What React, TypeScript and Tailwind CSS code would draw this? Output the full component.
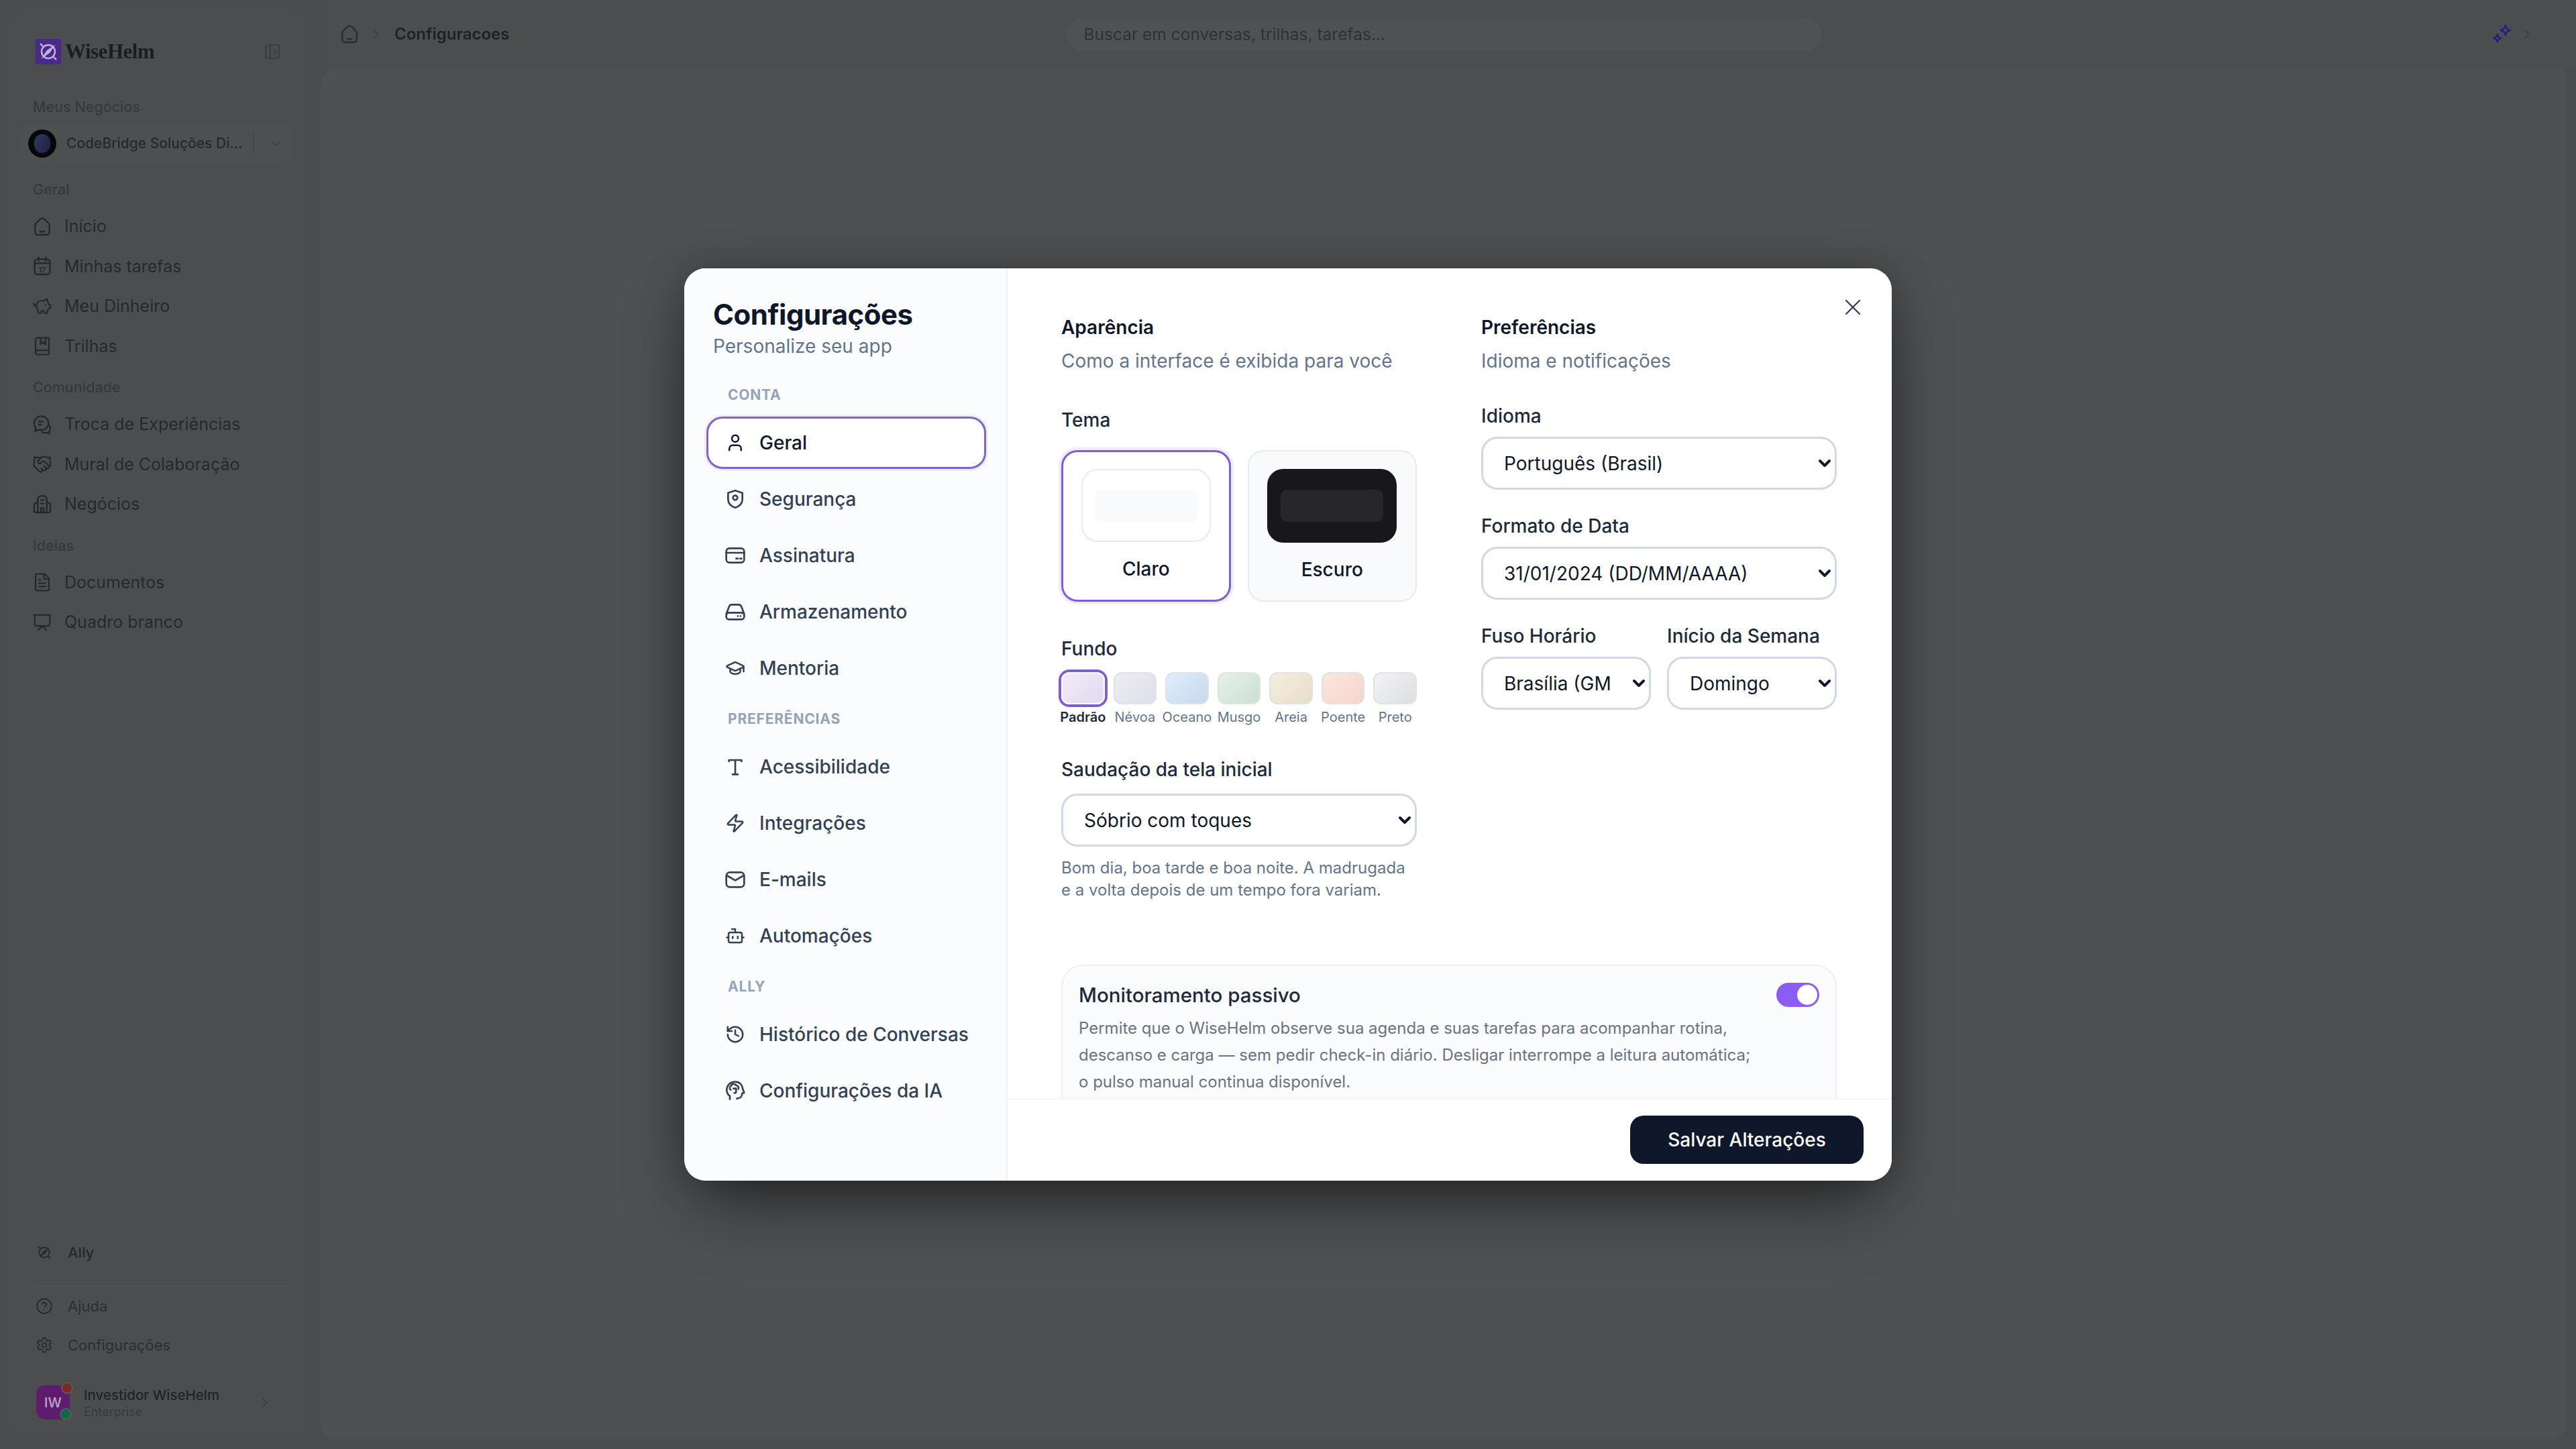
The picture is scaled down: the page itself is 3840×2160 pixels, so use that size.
import React from "react";
import { X, ChevronRight, ChevronDown, PanelLeftOpen, PiggyBank, BookMarked, Handshake, FileText, Presentation, CircleHelp, Settings, GraduationCap, Zap, Bot, History, User } from "lucide-react";

const S = ({ size = 32, sw = 2, children, className = "" }: { size?: number; sw?: number; children: React.ReactNode; className?: string }) => (
  <svg width={size} height={size} viewBox="0 0 24 24" fill="none" stroke="currentColor" strokeWidth={sw} strokeLinecap="round" strokeLinejoin="round" className={"shrink-0 " + className}>
    {children}
  </svg>
);

const HomeI = ({ size = 32 }: { size?: number }) => (
  <S size={size} sw={1.7}>
    <path d="M4 10.500c0-1.200.5-2 1.400-2.800l4.400-4.200c1.300-1.200 3.100-1.200 4.400 0l4.400 4.200c.9.8 1.400 1.600 1.400 2.800V18c0 1.900-1.100 3-3 3H7c-1.900 0-3-1.100-3-3z" />
    <path d="M9.500 17c1.600.8 3.400.8 5 0" />
  </S>
);
const CalI = () => (
  <svg width={32} height={32} viewBox="0 0 24 24" fill="none" stroke="currentColor" strokeWidth={1.7} strokeLinecap="round" className="shrink-0">
    <rect x="3.500" y="4" width="17" height="17" rx="3" />
    <path d="M8 2v4M16 2v4M3.500 8.500h17" />
    <text x="12" y="18.500" textAnchor="middle" fontSize="8" fontFamily="Inter" stroke="none" fill="currentColor" fontWeight="600">17</text>
  </svg>
);
const ChatI = () => (
  <S sw={1.7}>
    <path d="M11 2.500a8 8 0 0 1 8 8c0 4.400-3.600 7.500-8 7.500H7l-3 1.500.7-4A8 8 0 0 1 11 2.500z" />
    <path d="M8 8.500h5M8 12h3" />
    <path d="M20 13c1.300 2.300 1 5-.3 6.500l.3 2.500-3-1.200c-2 .6-4 .3-5.500-.8" />
  </S>
);
const BuildI = () => (
  <S sw={1.7}>
    <path d="M7 21V6a3.500 3.500 0 0 1 3.500-3.500h3A3.500 3.500 0 0 1 17 6v15" />
    <path d="M7 10H5.500A2.500 2.500 0 0 0 3 12.500V19a2 2 0 0 0 2 2h14a2 2 0 0 0 2-2v-6.500A2.500 2.500 0 0 0 18.500 10H17" />
    <path d="M10.500 7h3M10.500 11h3M10.500 21v-5h3v5" />
  </S>
);
const CompassI = ({ size = 26, cls = "" }: { size?: number; cls?: string }) => (
  <S size={size} sw={1.8} className={cls}>
    <circle cx="12" cy="12" r="7.500" />
    <path d="M20 4 13.500 13.500 4 20l6.500-9.500z" fill="currentColor" stroke="none" />
    <path d="M3.500 3.500 5.500 5.500M20.500 20.500l-2-2" />
  </S>
);

const Label = ({ children, first }: { children: React.ReactNode; first?: boolean }) => (
  <div className={"text-[21.500px] leading-[26px] font-medium text-[#37383b] " + (first ? "mb-[13px]" : "mt-[18px] mb-[13px]")}>{children}</div>
);
const Row = ({ icon, label }: { icon: React.ReactNode; label: string }) => (
  <div className="h-[59.500px] flex items-center gap-[18px] text-[25px] text-[#27282b]">
    <span className="w-[30px] flex justify-center -ml-[1px] text-[#25262a]">{icon}</span>
    <span>{label}</span>
  </div>
);
const BottomRow = ({ icon, label, medium }: { icon: React.ReactNode; label: string; medium?: boolean }) => (
  <div className={"h-[58px] flex items-center gap-[22px] text-[22px] pl-[4px] " + (medium ? "font-medium text-[#26272a]" : "text-[#2c2d30]")}>
    <span className="w-[26px] flex justify-center text-[#27282b]">{icon}</span>
    <span>{label}</span>
  </div>
);

const AppBackdrop = () => (
  <div className="w-[3840px] h-[2160px] flex bg-[#4b4c4e] blur-[0.5px] font-['Inter',sans-serif]">
    <aside className="w-[478px] shrink-0 pl-[12px] pt-[14px] pb-[15px] pr-[24px] flex">
      <div className="flex-1 bg-[#4c4d4f] rounded-[24px] pt-[44px] pl-[37px] pr-[20px] pb-[29px] flex flex-col">
        <div className="h-[38px] flex items-center">
          <div className="ml-[4px] w-[38px] h-[38px] bg-[#4a2a88] flex items-center justify-center text-[#bfb2e0]">
            <CompassI size={32} />
          </div>
          <span className="ml-[6px] font-['Liberation_Serif',serif] font-bold text-[31px] tracking-[-0.5px] text-[#1c1d20]">WiseHelm</span>
          <PanelLeftOpen size={26} strokeWidth={1.6} className="ml-auto mr-[17px] text-[#38393c]" />
        </div>
        <div className="mt-[50px]" />
        <Label first>Meus Negócios</Label>
        <div className="-ml-[17px] h-[57px] w-[404px] rounded-[16px] bg-[#4e4f51] flex items-center pl-[10px]">
          <div className="w-[42px] h-[42px] rounded-full bg-[#08080a] flex items-center justify-center">
            <div className="w-[24px] h-[28px] rounded-full bg-[linear-gradient(120deg,#2b3f5c,#241a44)]" />
          </div>
          <span className="ml-[15px] w-[288px] text-[21px] font-medium text-[#27282b] whitespace-nowrap">CodeBridge Soluções Di...</span>
          <span className="h-[36px] w-[2px] bg-[#48494b] -ml-[10px]" />
          <ChevronDown size={20} strokeWidth={1.6} className="ml-[22px] text-[#3c3d40]" />
        </div>
        <div className="mt-[27px]" />
        <Label first>Geral</Label>
        <Row icon={<HomeI />} label="Início" />
        <Row icon={<CalI />} label="Minhas tarefas" />
        <Row icon={<PiggyBank size={32} strokeWidth={1.7} />} label="Meu Dinheiro" />
        <Row icon={<BookMarked size={32} strokeWidth={1.7} />} label="Trilhas" />
        <Label>Comunidade</Label>
        <Row icon={<ChatI />} label="Troca de Experiências" />
        <Row icon={<Handshake size={32} strokeWidth={1.7} />} label="Mural de Colaboração" />
        <Row icon={<BuildI />} label="Negócios" />
        <Label>Ideias</Label>
        <Row icon={<FileText size={32} strokeWidth={1.7} />} label="Documentos" />
        <Row icon={<Presentation size={32} strokeWidth={1.7} />} label="Quadro branco" />
        <div className="mt-auto h-[2px] bg-[#4f5052] mb-[6px]" />
        <BottomRow icon={<CompassI size={24} />} label="Ally" medium />
        <div className="h-[2px] bg-[#4f5052] mt-[20px]" />
        <BottomRow icon={<CircleHelp size={28} strokeWidth={1.6} />} label="Ajuda" />
        <BottomRow icon={<Settings size={28} strokeWidth={1.6} />} label="Configurações" />
        <div className="mt-[31px] flex items-center pl-[5px] h-[51px]">
          <div className="relative w-[50px] h-[51px] rounded-[14px] bg-[#5f1c6e] flex items-center justify-center text-[20px] font-semibold text-[#b79cc0]">
            IW
            <span className="absolute -top-[5px] -right-[5px] w-[18px] h-[18px] rounded-full bg-[#7a2a22] border-[2px] border-[#5a5b5e]" />
            <span className="absolute -bottom-[1px] -right-[3px] w-[18px] h-[18px] rounded-full bg-[#0c6a48] border-[2px] border-[#5a5b5e]" />
          </div>
          <div className="ml-[21px]">
            <div className="text-[20.500px] leading-[28px] font-medium text-[#222326]">Investidor WiseHelm</div>
            <div className="text-[18px] leading-[22px] text-[#38393c]">Enterprise</div>
          </div>
          <ChevronRight size={24} strokeWidth={1.6} className="ml-auto mr-[29px] text-[#3c3d40]" />
        </div>
      </div>
    </aside>
    <div className="flex-1 flex flex-col">
      <header className="h-[102px] shrink-0 flex items-center pl-[27px] pr-[62px] bg-[#4c4d4f]">
        <span className="text-[#2a2b2e]"><HomeI size={32} /></span>
        <ChevronRight size={22} strokeWidth={1.6} className="ml-[13px] text-[#3c3d40]" />
        <span className="ml-[16px] text-[24px] font-semibold text-[#202124]">Configuracoes</span>
        <div className="ml-[829px] w-[1127px] h-[49px] rounded-full bg-[#505153] flex items-center pl-[27px] text-[24.500px] text-[#303134]">Buscar em conversas, trilhas, tarefas...</div>
        <svg width="36" height="36" viewBox="0 0 30 30" className="ml-auto mr-[-4px] text-[#2a1c80]" fill="none" stroke="currentColor" strokeWidth="2.200" strokeLinejoin="round">
          <path d="M19 4c.8 3.500 2 4.700 6 6-4 1.300-5.200 2.500-6 6-.8-3.500-2-4.700-6-6 4-1.300 5.200-2.500 6-6z" />
          <path d="M9 15.500c.5 2.500 1.500 3.500 4.500 4.500-3 1-4 2-4.500 4.500-.5-2.500-1.500-3.500-4.500-4.500 3-1 4-2 4.500-4.500z" />
        </svg>
        <ChevronRight size={22} strokeWidth={1.6} className="ml-[12px] text-[#3c3d40]" />
      </header>
      <div className="flex-1 mr-[13px] mb-[15px] bg-[#4f5051] rounded-tl-[24px] rounded-b-[24px] rounded-tr-[12px]" />
    </div>
  </div>
);

const Section = ({ children }: { children: React.ReactNode }) => (
  <div className="mt-[25px] mb-[20px] pl-[32px] text-[21px] leading-[24px] font-bold tracking-[0.8px] text-[#94a3b8]">{children}</div>
);
const NavItem = ({ icon, label, active }: { icon: React.ReactNode; label: string; active?: boolean }) => (
  <div className={"h-[78px] rounded-[24px] flex items-center pl-[26px] gap-[21px] text-[28px] font-medium border-[3px] " + (active ? "bg-white border-[#7f65c9] shadow-[0_0_0_3px_#f0ebfb] text-[#0f172a]" : "border-transparent text-[#334155]")}>
    <span className={"w-[30px] flex justify-center -ml-[1px] " + (active ? "text-[#0f172a]" : "text-[#334155]")}>{icon}</span>
    <span>{label}</span>
  </div>
);

const Sel = ({ value, cls = "", pr = "pr-[40px]" }: { value: string; cls?: string; pr?: string }) => (
  <div className={"relative h-[79px] " + cls}>
    <select defaultValue={value} className={"appearance-none w-full h-full bg-white rounded-[24px] border-[3px] border-[#d1d9e4] pl-[31px] text-[28px] text-[#0f172a] " + pr}>
      <option>{value}</option>
    </select>
    <svg width="20" height="14" viewBox="0 0 20 14" fill="none" stroke="#0f172a" strokeWidth="4" strokeLinecap="round" strokeLinejoin="round" className="absolute right-[8px] top-[33px]">
      <path d="M3 3l7 7 7-7" />
    </svg>
  </div>
);
const FieldLabel = ({ children, cls = "" }: { children: React.ReactNode; cls?: string }) => (
  <div className={"text-[28px] leading-[36px] font-medium text-[#1e293b] " + cls}>{children}</div>
);
const Head = ({ title, sub }: { title: string; sub: string }) => (
  <>
    <div className="text-[28px] leading-[40px] font-semibold text-[#0f172a]">{title}</div>
    <div className="mt-[10px] text-[28px] leading-[40px] text-[#64748b]">{sub}</div>
  </>
);
const Swatch = ({ label, bg, active }: { label: string; bg: string; active?: boolean }) => (
  <div className="flex flex-col items-center min-w-0">
    <div className={"w-full h-[48px] rounded-[12px] border-[2px] " + bg + (active ? " border-white shadow-[0_0_0_4px_#7f5fd0]" : " border-[#dfe2e6]")} />
    <span className={"mt-[7px] text-[20px] leading-[24px] whitespace-nowrap " + (active ? "font-semibold text-[#1e293b]" : "text-[#64748b]")}>{label}</span>
  </div>
);

const ShieldI = () => (
  <S>
    <path d="M12 2.500 20 5v7c0 4.700-3.300 8-8 9.500C7.300 20 4 16.700 4 12V5z" />
    <circle cx="12" cy="10.500" r="2.500" />
  </S>
);
const CardI = () => (
  <S>
    <rect x="2" y="4" width="20" height="16" rx="3.500" />
    <path d="M2 9h20M13 15.500h2M17.500 15.500h1.500" />
  </S>
);
const DriveI = () => (
  <S>
    <path d="M2 14.500 5 6.500A3.500 3.500 0 0 1 8.300 4h7.400A3.500 3.500 0 0 1 19 6.500l3 8" />
    <rect x="2" y="13" width="20" height="7.500" rx="3" />
    <path d="M15 16.800h.01M18 16.800h.01" />
  </S>
);
const SerifT = () => (
  <S>
    <path d="M5 6V4.500h14V6M12 4.500V20.500M9 20.500h6" />
  </S>
);
const MailI = () => (
  <S>
    <rect x="2" y="4" width="20" height="16.500" rx="4" />
    <path d="M2.500 7.500 12 13l9.500-5.500" />
  </S>
);
const HeadI = () => (
  <S>
    <path d="M6 21.500v-3.500A9 9 0 0 1 2.500 11 9 9 0 0 1 12 2c5 0 8 3.500 8.300 7.500l1.700 4.500-2.300 1c0 3-1.700 5.500-5.700 5.500V21" />
    <path d="M7 11a2.500 2.500 0 0 1 .5-4.500A3 3 0 0 1 13 6a2.800 2.800 0 0 1 2.500 4M10 9.500h3v3a2 2 0 0 1-2 2" />
  </S>
);

const Modal = () => (
  <div className="absolute inset-0 flex items-center justify-center font-['Inter',sans-serif]">
    <div className="relative w-[1800px] h-[1360px] bg-white rounded-[32px] overflow-hidden flex shadow-[0_50px_100px_-24px_rgba(0,0,0,0.5),0_0_60px_rgba(0,0,0,0.25)]">
      <div className="w-[482px] shrink-0 bg-[#fbfcfe] border-r-[2px] border-[#f1f3f6] pl-[33px] pr-[30px] pt-[41px]">
        <div className="pl-[10px] text-[42px] leading-[56px] font-bold tracking-[-0.5px] text-[#0f172a]">Configurações</div>
        <div className="pl-[10px] mt-[1px] text-[28px] leading-[36px] text-[#64748b]">Personalize seu app</div>
        <div className="mt-[43px] mb-[20px] pl-[32px] text-[21px] leading-[24px] font-bold tracking-[0.8px] text-[#94a3b8]">CONTA</div>
        <div className="flex flex-col gap-[6px]">
          <NavItem active icon={<User size={32} strokeWidth={2} />} label="Geral" />
          <NavItem icon={<ShieldI />} label="Segurança" />
          <NavItem icon={<CardI />} label="Assinatura" />
          <NavItem icon={<DriveI />} label="Armazenamento" />
          <NavItem icon={<GraduationCap size={34} strokeWidth={2} />} label="Mentoria" />
        </div>
        <Section>PREFERÊNCIAS</Section>
        <div className="flex flex-col gap-[6px]">
          <NavItem icon={<SerifT />} label="Acessibilidade" />
          <NavItem icon={<Zap size={30} strokeWidth={2} />} label="Integrações" />
          <NavItem icon={<MailI />} label="E-mails" />
          <NavItem icon={<Bot size={32} strokeWidth={2} />} label="Automações" />
        </div>
        <Section>ALLY</Section>
        <div className="flex flex-col gap-[6px]">
          <NavItem icon={<History size={32} strokeWidth={2} />} label="Histórico de Conversas" />
          <NavItem icon={<HeadI />} label="Configurações da IA" />
        </div>
      </div>
      <div className="flex-1 min-w-0 flex flex-col">
        <div className="flex-1 min-h-0 overflow-hidden pl-[80px] pr-[82px] pt-[68px]">
          <div className="grid grid-cols-2 gap-x-[96px]">
            <div>
              <Head title="Aparência" sub="Como a interface é exibida para você" />
              <FieldLabel cls="mt-[50px]">Tema</FieldLabel>
              <div className="mt-[27px] grid grid-cols-2 gap-[25px]">
                <div className="h-[226px] rounded-[24px] bg-white border-[3px] border-[#7f5fd0] shadow-[0_0_0_4px_#f0ebfb] flex flex-col items-center pt-[25px]">
                  <div className="w-[193px] h-[109px] rounded-[24px] bg-white border-[2px] border-[#e8eaee] flex items-center justify-center">
                    <div className="w-[153px] h-[48px] rounded-[10px] bg-[#f9fafb]" />
                  </div>
                  <div className="mt-[22px] text-[28px] leading-[36px] font-medium text-[#0f172a]">Claro</div>
                </div>
                <div className="h-[226px] rounded-[24px] bg-[#f8fafc] border-[2px] border-[#e8eaee] flex flex-col items-center pt-[26px]">
                  <div className="w-[193px] h-[110px] rounded-[24px] bg-[#18181b] flex items-center justify-center">
                    <div className="w-[153px] h-[48px] rounded-[10px] bg-[#27272a]" />
                  </div>
                  <div className="mt-[22px] text-[28px] leading-[36px] font-medium text-[#0f172a]">Escuro</div>
                </div>
              </div>
              <FieldLabel cls="mt-[52px]">Fundo</FieldLabel>
              <div className="mt-[17px] grid grid-cols-7 gap-[13px]">
                <Swatch active label="Padrão" bg="bg-[linear-gradient(135deg,#efeafa,#e3dbf1)]" />
                <Swatch label="Névoa" bg="bg-[linear-gradient(135deg,#eceef2,#dcdfe7)]" />
                <Swatch label="Oceano" bg="bg-[linear-gradient(135deg,#e2edf9,#c4d9ee)]" />
                <Swatch label="Musgo" bg="bg-[linear-gradient(135deg,#e6f1e9,#c9e0d2)]" />
                <Swatch label="Areia" bg="bg-[linear-gradient(135deg,#f5eedf,#e9dec7)]" />
                <Swatch label="Poente" bg="bg-[linear-gradient(135deg,#fbe6dd,#f5d5cd)]" />
                <Swatch label="Preto" bg="bg-[linear-gradient(135deg,#f2f3f4,#dcdee0)]" />
              </div>
              <FieldLabel cls="mt-[48px]">Saudação da tela inicial</FieldLabel>
              <Sel value="Sóbrio com toques" cls="mt-[18px]" />
              <p className="mt-[15px] text-[24px] leading-[33px] text-[#64748b]">Bom dia, boa tarde e boa noite. A madrugada e a volta depois de um tempo fora variam.</p>
            </div>
            <div>
              <Head title="Preferências" sub="Idioma e notificações" />
              <FieldLabel cls="mt-[44px]">Idioma</FieldLabel>
              <Sel value="Português (Brasil)" cls="mt-[13px]" />
              <FieldLabel cls="mt-[36px]">Formato de Data</FieldLabel>
              <Sel value="31/01/2024 (DD/MM/AAAA)" cls="mt-[13px]" />
              <div className="mt-[36px] grid grid-cols-2 gap-x-[24px]">
                <div>
                  <FieldLabel>Fuso Horário</FieldLabel>
                  <Sel value="Brasília (GMT-3)" cls="mt-[13px]" pr="pr-[56px]" />
                </div>
                <div>
                  <FieldLabel>Início da Semana</FieldLabel>
                  <Sel value="Domingo" cls="mt-[13px]" />
                </div>
              </div>
            </div>
          </div>
          <div className="mt-[95px] rounded-[32px] bg-[#fafbfd] border-[2px] border-[#eef0f4] pl-[24px] pr-[24px] pt-[23px] pb-[60px] flex justify-between">
            <div className="max-w-[1010px]">
              <div className="text-[29.500px] leading-[40px] font-medium text-[#1e293b]">Monitoramento passivo</div>
              <p className="mt-[10px] text-[24px] leading-[40px] text-[#6b7280]">Permite que o WiseHelm observe sua agenda e suas tarefas para acompanhar rotina, descanso e carga — sem pedir check-in diário. Desligar interrompe a leitura automática; o pulso manual continua disponível.</p>
            </div>
            <div className="w-[64px] h-[36px] rounded-full bg-[#8b5cf6] flex items-center justify-end pr-[3px] mt-[2px] shrink-0">
              <div className="w-[30px] h-[30px] rounded-full bg-white" />
            </div>
          </div>
        </div>
        <div className="h-[123px] shrink-0 bg-white border-t-[2px] border-[#f3f4f6] flex items-center justify-end pr-[42px] pb-[2px]">
          <div className="w-[348px] h-[72px] rounded-[20px] bg-[#0f172a] flex items-center justify-center text-[28px] font-medium text-white">Salvar Alterações</div>
        </div>
      </div>
      <X size={40} strokeWidth={1.4} className="absolute right-[38px] top-[38px] text-[#334155]" />
    </div>
  </div>
);

export default function App() {
  return (
    <div className="relative w-[3840px] h-[2160px] overflow-hidden">
      <AppBackdrop />
      <Modal />
    </div>
  );
}
